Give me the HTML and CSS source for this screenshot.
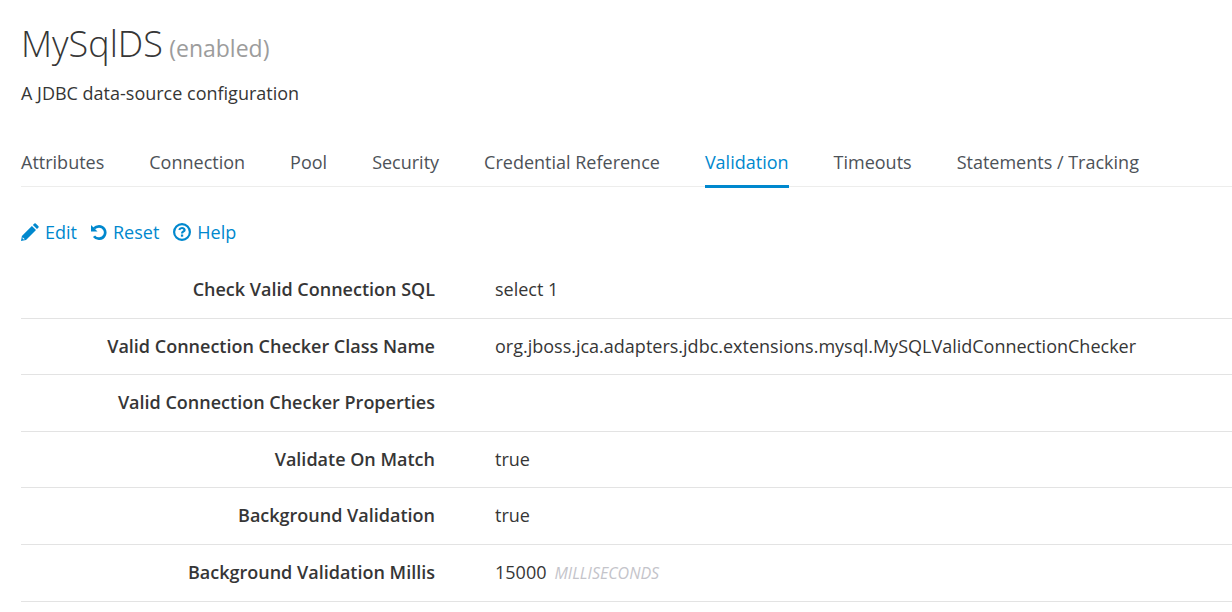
FILE: index.html
```
<!DOCTYPE html>
<html lang="en">
<head>
<meta charset="utf-8">
<title>MySqlDS</title>
<link rel="stylesheet" href="styles.css">
</head>
<body>
<main class="page">
  <header class="header">
    <h1 class="title">MySqlDS <span class="status">(enabled)</span></h1>
    <p class="description">A JDBC data-source configuration</p>
  </header>
  <nav class="tabs">
    <a class="tab" href="#attributes">Attributes</a>
    <a class="tab" href="#connection">Connection</a>
    <a class="tab" href="#pool">Pool</a>
    <a class="tab" href="#security">Security</a>
    <a class="tab" href="#credential">Credential Reference</a>
    <a class="tab active" href="#validation" aria-current="page">Validation</a>
    <a class="tab" href="#timeouts">Timeouts</a>
    <a class="tab" href="#statements">Statements / Tracking</a>
  </nav>
  <div class="actions">
    <a class="action" href="#edit"><svg class="icon" viewBox="0 0 18 18" aria-hidden="true"><path fill="currentColor" fill-rule="evenodd" d="M0 18 .9 13 10.900 3 15 7.100 5 17.100ZM1.700 14.300 1.500 15.400 2.700 16.500 3.800 16.200ZM11.900 2 13.400.5Q14 0 14.700.5L17.500 3.300Q18 4 17.500 4.600L16 6.100Z"/></svg>Edit</a>
    <a class="action" href="#reset"><svg class="icon icon-reset" viewBox="0 0 16 18" aria-hidden="true"><path fill="currentColor" d="M0 2v6.500h6.500z"/><path d="M3 5.400Q5 3.300 8 3.300A6.200 6.200 0 1 1 3 13.200" fill="none" stroke="currentColor" stroke-width="2.700"/></svg>Reset</a>
    <a class="action" href="#help"><svg class="icon" viewBox="0 0 18 18" aria-hidden="true"><circle cx="9" cy="9" r="7.900" fill="none" stroke="currentColor" stroke-width="2.200"/><path d="M6.200 6.800Q6.900 5 9 5T11.600 7Q11.600 8 10.300 8.600 9 9.200 9 10.500" fill="none" stroke="currentColor" stroke-width="2.200"/><path fill="currentColor" d="M7.900 11.500h2.300v2.200H7.900z"/></svg>Help</a>
  </div>
  <dl class="properties">
    <div class="row"><dt>Check Valid Connection SQL</dt><dd>select 1</dd></div>
    <div class="row"><dt>Valid Connection Checker Class Name</dt><dd>org.jboss.jca.adapters.jdbc.extensions.mysql.MySQLValidConnectionChecker</dd></div>
    <div class="row"><dt>Valid Connection Checker Properties</dt><dd></dd></div>
    <div class="row"><dt>Validate On Match</dt><dd>true</dd></div>
    <div class="row"><dt>Background Validation</dt><dd>true</dd></div>
    <div class="row"><dt>Background Validation Millis</dt><dd>15000<span class="unit">MILLISECONDS</span></dd></div>
  </dl>
</main>
</body>
</html>
```
FILE: styles.css
```
* { box-sizing: border-box; }
body {
  margin: 0;
  background: #fff;
  color: #363636;
  font: 18px/30px "Open Sans", sans-serif;
}
a { color: inherit; text-decoration: none; }
.page { padding: 20px 0 0 21px; }
.title { margin: 0; font-size: 36px; font-weight: 300; line-height: 48px; }
.status { margin-left: -3px; color: #9c9c9c; font-size: 23px; font-weight: 400; }
.description { margin: 6px 0 0; }
.tabs { display: flex; gap: 45px; margin-top: 39px; border-bottom: 1px solid #ededec; }
.tab { margin-bottom: -2px; padding-bottom: 8px; border-bottom: 3px solid transparent; color: #4d5258; white-space: nowrap; }
.active { border-color: #0088ce; color: #0088ce; }
.actions { display: flex; gap: 14px; margin-top: 30px; color: #0088ce; }
.action { display: flex; align-items: center; gap: 6px; }
.icon { width: 18px; height: 18px; }
.icon-reset { width: 16px; }
.properties { margin: 15px 0 0; }
.row { display: grid; grid-template-columns: 414px 1fr; column-gap: 60px; padding: 12px 0 14px; border-bottom: 1px solid #e3e3e3; }
.row:nth-child(even) { padding-bottom: 13px; }
dt { font-weight: 600; text-align: right; }
dd { margin: 0; }
.unit { margin-left: 8px; color: #c4c4ca; font-size: 16px; font-style: italic; }
```
